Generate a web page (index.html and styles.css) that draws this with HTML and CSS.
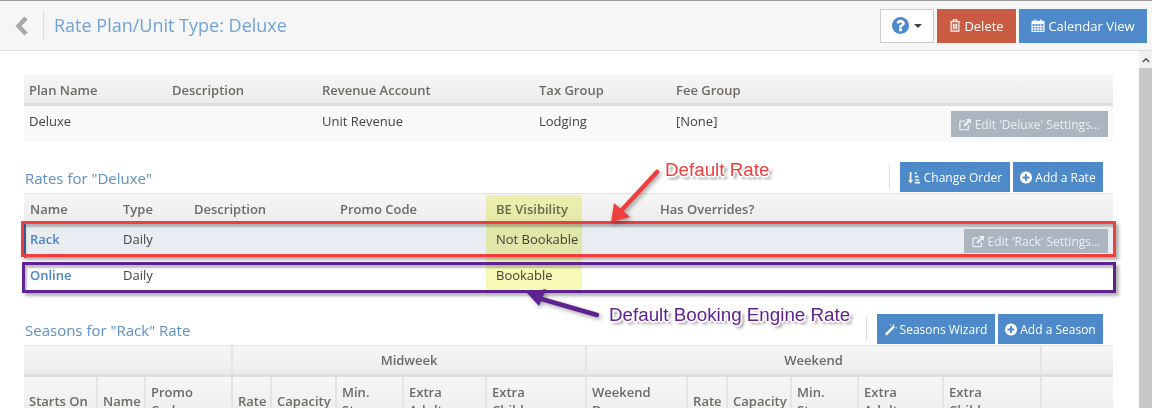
FILE: index.html
```html
<!DOCTYPE html>
<html lang="en">
<head>
<meta charset="utf-8">
<title>Rate Plan/Unit Type: Deluxe</title>
<link rel="stylesheet" href="styles.css">
</head>
<body>
<div class="app">
  <header class="topbar">
    <svg class="back" viewBox="0 0 14 20"><path d="M11 2 3.500 10 11 18" fill="none" stroke="#a9a9a9" stroke-width="4.500"/></svg>
    <h1 class="title">Rate Plan/Unit Type: Deluxe</h1>
    <div class="top-actions">
      <button class="btn btn-help">
        <svg class="ic-help" viewBox="128 128 1536 1536"><path fill="#4e8aca" d="M1024 1376v-192q0-14-9-23t-23-9h-192q-14 0-23 9t-9 23v192q0 14 9 23t23 9h192q14 0 23-9t9-23zm256-672q0-88-55.500-163t-138.500-116-170-41q-243 0-371 213-15 24 8 42l132 100q7 6 19 6 16 0 25-12 53-68 86-92 34-24 86-24 48 0 85.500 26t37.500 59q0 38-20 61t-68 45q-63 28-115.500 86.500t-52.500 125.500v36q0 14 9 23t23 9h192q14 0 23-9t9-23q0-19 21.500-49.500t54.500-49.500q32-18 49-28.500t46-35 44.500-48 28-60.500 12.500-81zm384 192q0 209-103 385.500t-279.500 279.500-385.500 103-385.500-103-279.500-279.500-103-385.500 103-385.500 279.500-279.500 385.500-103 385.500 103 279.500 279.500 103 385.500z"/></svg>
        <span class="caret"></span>
      </button>
      <button class="btn btn-red">
        <svg class="ic" viewBox="0 0 12 14"><path fill="none" stroke="currentColor" stroke-width="1.200" d="M1.800 3.500V13h8.400V3.500M.5 3h11M4 3V1h4v2M4.300 5v6M6 5v6M7.700 5v6"/></svg>
        Delete
      </button>
      <button class="btn btn-blue btn-cal">
        <svg class="ic ic-wide" viewBox="0 0 14 14"><path fill="currentColor" fill-rule="evenodd" d="M1 2h2V.5h1.500V2h5V.5H11V2h2a1 1 0 0 1 1 1v10a1 1 0 0 1-1 1H1a1 1 0 0 1-1-1V3a1 1 0 0 1 1-1zm.2 3.500v2h2.200v-2zm3.200 0v2h2.100v-2zm3.100 0v2h2.100v-2zm3.100 0v2h2.200v-2zm-9.400 3v1.800h2.200V8.500zm3.200 0v1.800h2.100V8.500zm3.100 0v1.800h2.100V8.500zm3.100 0v1.800h2.200V8.500zm-9.400 2.800v1.500h2.200v-1.500zm3.200 0v1.500h2.100v-1.500zm3.100 0v1.500h2.100v-1.500zm3.100 0v1.500h2.200v-1.500z"/></svg>
        Calendar View
      </button>
    </div>
  </header>

  <div class="body-row">
    <main class="content">
      <table class="grid plan-table">
        <colgroup><col class="p1"><col class="p2"><col class="p3"><col class="p4"><col></colgroup>
        <thead>
          <tr><th>Plan Name</th><th>Description</th><th>Revenue Account</th><th>Tax Group</th><th>Fee Group</th></tr>
        </thead>
        <tbody>
          <tr class="row-plan">
            <td>Deluxe</td><td></td><td>Unit Revenue</td><td>Lodging</td>
            <td class="with-action"><span>[None]</span>
              <button class="btn btn-muted btn-deluxe">
                <svg class="ic" viewBox="0 0 14 14"><path fill="none" stroke="currentColor" stroke-width="1.500" d="M11 8v4a1 1 0 0 1-1 1H2a1 1 0 0 1-1-1V4a1 1 0 0 1 1-1h5"/><path fill="currentColor" d="M8 .5h6v6l-2-2-5 5-2-2 5-5z"/></svg>
                Edit 'Deluxe' Settings...
              </button>
            </td>
          </tr>
        </tbody>
      </table>

      <div class="section-head rates-head">
        <h2 class="section-title">Rates for "Deluxe"</h2>
        <div class="section-actions">
          <span class="vr"></span>
          <button class="btn btn-blue btn-order">
            <svg class="ic" viewBox="0 0 14 14"><path fill="currentColor" d="M2 1h2v9h2l-3 4-3-4h2zM8 1h2v2H8zM8 5h4v2H8zM8 9h5v1.500H8zM8 12h6v2H8z"/></svg>
            Change Order
          </button>
          <button class="btn btn-blue btn-addrate">
            <svg class="ic" viewBox="128 128 1536 1536"><use href="#plus"/></svg>
            Add a Rate
          </button>
        </div>
      </div>
      <table class="grid rate-table">
        <colgroup><col class="r1"><col class="r2"><col class="r3"><col class="r4"><col class="r5"><col class="r6"><col></colgroup>
        <thead>
          <tr><th>Name</th><th>Type</th><th>Description</th><th>Promo Code</th><th>BE Visibility</th><th>Has Overrides?</th><th></th></tr>
        </thead>
        <tbody>
          <tr class="row-rack">
            <td><a class="link" href="#">Rack</a></td><td>Daily</td><td></td><td></td><td>Not Bookable</td><td></td>
            <td class="with-action">
              <button class="btn btn-muted btn-rack">
                <svg class="ic" viewBox="0 0 14 14"><path fill="none" stroke="currentColor" stroke-width="1.500" d="M11 8v4a1 1 0 0 1-1 1H2a1 1 0 0 1-1-1V4a1 1 0 0 1 1-1h5"/><path fill="currentColor" d="M8 .5h6v6l-2-2-5 5-2-2 5-5z"/></svg>
                Edit 'Rack' Settings...
              </button>
            </td>
          </tr>
          <tr class="row-online">
            <td><a class="link" href="#">Online</a></td><td>Daily</td><td></td><td></td><td>Bookable</td><td></td><td></td>
          </tr>
        </tbody>
      </table>

      <div class="section-head seasons-head">
        <h2 class="section-title">Seasons for "Rack" Rate</h2>
        <div class="section-actions">
          <span class="vr"></span>
          <button class="btn btn-blue btn-wizard">
            <svg class="ic" viewBox="0 0 14 14"><path fill="currentColor" d="M0 12 9.500 2.500l2 2L2 14zM10 .5l.6 1 1 .4-1 .5-.6 1-.5-1-1-.5 1-.4zM13 4l.4.800.6.400-.6.300L13 6.300l-.4-.8-.6-.3.600-.4zM6 .5l.4.700.6.300-.6.300L6 2.500l-.4-.7L5 1.500l.6-.3z"/></svg>
            Seasons Wizard
          </button>
          <button class="btn btn-blue btn-addseason">
            <svg class="ic" viewBox="128 128 1536 1536"><use href="#plus"/></svg>
            Add a Season
          </button>
        </div>
      </div>
      <table class="grid season-table">
        <colgroup>
          <col class="s1"><col class="s2"><col class="s3"><col class="s4"><col class="s5"><col class="s6"><col class="s7"><col class="s8">
          <col class="s9"><col class="s10"><col class="s11"><col class="s12"><col class="s13"><col class="s14"><col>
        </colgroup>
        <thead>
          <tr class="band"><th colspan="3"></th><th colspan="5" class="center">Midweek</th><th colspan="6" class="center">Weekend</th><th></th></tr>
          <tr>
            <th>Starts On</th><th>Name</th><th>Promo Code</th>
            <th>Rate</th><th>Capacity</th><th>Min. Stay</th><th>Extra<br>Adult</th><th>Extra<br>Child</th>
            <th>Weekend Days</th><th>Rate</th><th>Capacity</th><th>Min. Stay</th><th>Extra<br>Adult</th><th>Extra<br>Child</th><th></th>
          </tr>
        </thead>
      </table>
    </main>
    <div class="scrollbar">
      <div class="scroll-btn"><svg viewBox="0 0 10 6"><path d="M1 5.500 5 1.500l4 4" fill="none" stroke="#555" stroke-width="2"/></svg></div>
      <div class="scroll-thumb"></div>
    </div>
  </div>

  <div class="hilite"></div>
  <div class="callout-box box-red"></div>
  <div class="callout-box box-purple"></div>
  <svg class="arrows" viewBox="0 0 1152 409">
    <g class="arrow-shadow">
      <path d="M657 172 620 212" stroke="#ef3e3e" stroke-width="4.500" stroke-linecap="round"/>
      <path d="M611 222 614 203 630 217z" fill="#ef3e3e"/>
      <path d="M597 315 538 298" stroke="#5e2390" stroke-width="4.500" stroke-linecap="round"/>
      <path d="M527 293 546 289 539 306z" fill="#5e2390"/>
    </g>
  </svg>
  <div class="note note-red">Default Rate</div>
  <div class="note note-purple">Default Booking Engine Rate</div>

  <svg class="defs" aria-hidden="true"><defs><path id="plus" fill="currentColor" d="M1344 960v-128q0-26-19-45t-45-19h-256v-256q0-26-19-45t-45-19h-128q-26 0-45 19t-19 45v256h-256q-26 0-45 19t-19 45v128q0 26 19 45t45 19h256v256q0 26 19 45t45 19h128q26 0 45-19t19-45v-256h256q26 0 45-19t19-45zm320-64q0 209-103 385.500t-279.500 279.500-385.500 103-385.500-103-279.500-279.500-103-385.500 103-385.500 279.500-279.500 385.500-103 385.500 103 279.500 279.500 103 385.500z"/></defs></svg>
</div>
</body>
</html>
```
FILE: styles.css
```css
* { box-sizing: border-box; }
html, body { margin: 0; height: 409px; overflow: hidden; background: #fff; }
body { font-family: "Open Sans", "Liberation Sans", sans-serif; font-size: 13px; color: #444; }

.app { position: relative; width: 1152px; height: 409px; overflow: hidden; }

.topbar {
  display: flex; align-items: center; height: 51px; background: #f6f6f6;
  border-top: 1px solid #999; border-bottom: 1px solid #ddd;
}
.back { width: 14px; height: 20px; margin-left: 15px; flex: none; }
.title {
  margin: 0 0 0 14px; padding-left: 10px; height: 31px; line-height: 30px;
  border-left: 1px solid #ddd; font-size: 18px; font-weight: 400; color: #6fa3d6;
}
.top-actions { margin-left: auto; margin-right: 5px; display: flex; gap: 3px; }

.btn {
  display: inline-flex; align-items: center; justify-content: center; gap: 3px;
  border: 0; padding: 0; font: inherit; font-size: 12px; color: #fff; white-space: nowrap;
}
.btn-red { background: #c95b43; width: 79px; height: 34px; font-size: 13px; }
.btn-blue { background: #4e8aca; height: 30px; }
.btn-cal { width: 128px; height: 34px; font-size: 13px; }
.btn-help { width: 54px; height: 34px; background: #fff; border: 1px solid #ccc; gap: 5px; }
.btn-muted { background: #aab5bf; color: #eceff1; height: 26px; gap: 4px; }
.btn-deluxe { width: 157px; }
.btn-rack { width: 144px; height: 24px; }
.btn-order { width: 110px; gap: 4px; }
.btn-addrate { width: 90px; }
.btn-wizard { width: 118px; }
.btn-addseason { width: 105px; }

.ic { width: 12px; height: 13px; flex: none; }
.ic-wide { width: 14px; }
.ic-help { width: 17px; height: 17px; }
.caret { width: 0; height: 0; border: 4px solid transparent; border-top-color: #444; border-bottom: 0; }

.body-row { display: flex; height: 357px; }
.content { flex: 1; min-width: 0; padding: 24px 26px 0 24px; overflow: hidden; }

.scrollbar { width: 13px; flex: none; display: flex; flex-direction: column; background: #f1f1f1; }
.scroll-btn { height: 17px; background: #f1f1f1; display: flex; align-items: center; justify-content: center; }
.scroll-btn svg { width: 8px; height: 6px; }
.scroll-thumb { flex: 1; background: #c8c8c8; }

.grid { width: 1089px; border-collapse: separate; border-spacing: 0; table-layout: fixed; }
.grid th {
  padding: 0 5px; text-align: left; font-weight: 600; font-size: 13px; color: #6e6a66;
  background: linear-gradient(#f6f6f6, #ececec); line-height: 18px;
}
.grid td { padding: 0 5px; font-size: 13px; color: #444; vertical-align: middle; }

.plan-table th { height: 31px; border-bottom: 3px solid #dedede; padding-top: 2px; }
.row-plan td { height: 36px; background: #f9f9f9; padding-bottom: 6px; }
.p1 { width: 143px; } .p2 { width: 150px; } .p3 { width: 217px; } .p4 { width: 137px; }

.with-action { position: relative; }
.btn-deluxe { position: absolute; right: 5px; top: 5px; }
.btn-rack { position: absolute; right: 5px; top: 7px; }

.section-head { display: flex; align-items: center; justify-content: space-between; height: 31px; padding-right: 10px; }
.rates-head { margin-top: 20px; }
.seasons-head { margin-top: 22px; }
.section-title { margin: 0 0 0 1px; font-size: 15px; font-weight: 400; color: #5d91c7; }
.section-actions { display: flex; align-items: center; gap: 3px; align-self: flex-start; }
.vr { width: 1px; height: 24px; background: #ddd; margin-right: 7px; }

.rate-table th { height: 29px; border-top: 1px solid #dbe6f1; padding: 2px 5px 0 6px; }
.rate-table td { height: 34px; padding-left: 6px; }
.row-rack td { height: 36px; background: #e9ecf0; padding-bottom: 3px; }
.row-rack td:first-child { box-shadow: inset 2px 0 0 #3f76b3; }
.row-online td { background: #fff; }
.r1 { width: 93px; } .r2 { width: 71px; } .r3 { width: 146px; } .r4 { width: 156px; } .r5 { width: 164px; } .r6 { width: 310px; }
.link { color: #4a85c6; font-weight: 600; text-decoration: none; }

.season-table th { border-left: 2px solid #e4e4e4; vertical-align: middle; }
.season-table th:first-child { border-left: 0; }
.season-table .band th { height: 32px; border-top: 1px solid #dbe6f1; border-bottom: 3px solid #dedede; }
.season-table .center { text-align: center; }
.season-table tr:last-child th { height: 47px; }
.s1 { width: 72px; } .s2 { width: 48px; } .s3 { width: 87px; } .s4 { width: 39px; } .s5 { width: 65px; }
.s6 { width: 67px; } .s7 { width: 83px; } .s8 { width: 100px; } .s9 { width: 101px; } .s10 { width: 40px; }
.s11 { width: 64px; } .s12 { width: 67px; } .s13 { width: 85px; } .s14 { width: 98px; }

.hilite { position: absolute; left: 486px; top: 195px; width: 96px; height: 95px; background: #f7fab6; mix-blend-mode: multiply; }
.callout-box { position: absolute; box-shadow: 3px 3px 3px rgba(0, 0, 0, .3), inset 2px 3px 2px rgba(0, 0, 0, .25); }
.box-red { left: 21px; top: 221px; width: 1095px; height: 36px; border: 3px solid #ef3e3e; }
.box-purple { left: 22px; top: 262px; width: 1094px; height: 31px; border: 3px solid #5e2390; }

.arrows { position: absolute; left: 0; top: 0; width: 1152px; height: 409px; pointer-events: none; }
.arrow-shadow { filter: drop-shadow(2px 2px 2px rgba(0, 0, 0, .35)); }
.defs { position: absolute; width: 0; height: 0; }

.note {
  position: absolute; font-family: "Liberation Sans", Arial, sans-serif; font-size: 18.8px; line-height: 20px; white-space: nowrap;
  text-shadow: 1px 0 0 #fff, -1px 0 0 #fff, 0 1px 0 #fff, 0 -1px 0 #fff, 1px 1px 0 #fff, -1px -1px 0 #fff, 1px -1px 0 #fff, -1px 1px 0 #fff, 2px 0 1px #fff, -2px 0 1px #fff, 0 2px 1px #fff, 0 -2px 1px #fff, 3px 3px 3px rgba(0, 0, 0, .55);
}
.note-red { left: 665px; top: 160px; color: #ef3e3e; }
.note-purple { left: 609px; top: 305px; color: #5e2390; }
```
